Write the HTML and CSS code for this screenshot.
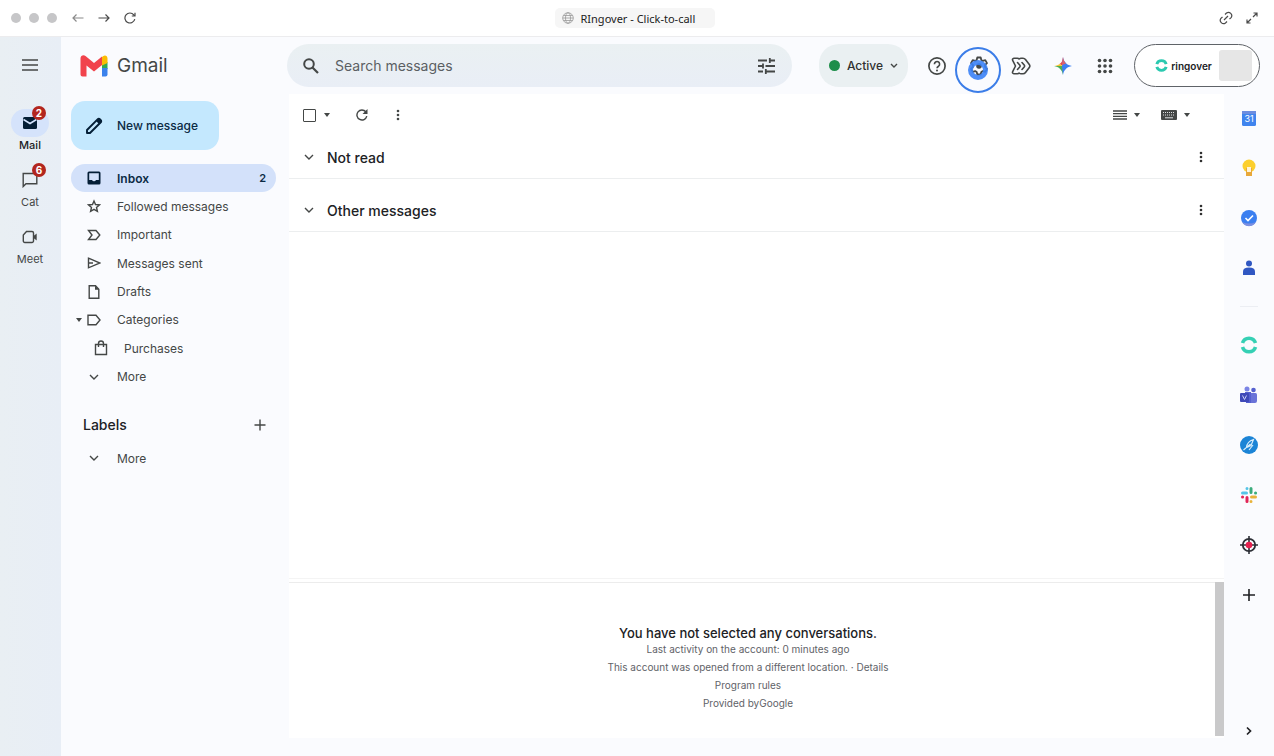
FILE: index.html
```html
<!DOCTYPE html>
<html lang="en">
<head>
    <meta charset="UTF-8">
    <meta name="viewport" content="width=device-width, initial-scale=1.0">
    <title>RIngover - Click-to-call</title>
    <link rel="stylesheet" href="styles.css">
</head>
<body>
    <header class="browser-bar">
        <div class="browser-left">
            <span class="dot"></span><span class="dot"></span><span class="dot"></span>
            <button class="nav-btn back" aria-label="Back"><svg width="12" height="12" viewBox="0 0 12 12"><path d="M11.500 6H1M4.500 2.500L1 6l3.500 3.500"/></svg></button>
            <button class="nav-btn" aria-label="Forward"><svg width="12" height="12" viewBox="0 0 12 12"><path d="M.5 6H11M7.500 2.500L11 6 7.500 9.500"/></svg></button>
            <button class="nav-btn" aria-label="Reload"><svg width="12" height="12" viewBox="0 0 12 12"><path d="M10.800 7.200A5 5 0 1 1 9.800 2.800L11 4M11 .8V4H7.800"/></svg></button>
        </div>
        <div class="tab">
            <svg width="12" height="12" viewBox="0 0 12 12"><circle cx="6" cy="6" r="5.300"/><ellipse cx="6" cy="6" rx="2.500" ry="5.300"/><path d="M.7 6h10.600M1.500 3.500h9M1.500 8.500h9"/></svg>
            <span>RIngover - Click-to-call</span>
        </div>
        <div class="browser-right">
            <button class="nav-btn" aria-label="Copy link"><svg width="14" height="14" viewBox="0 0 14 14"><path d="M6 3.500L7.500 2a3.300 3.300 0 0 1 4.600 4.600L10.500 8M8 10.500L6.500 12A3.300 3.300 0 0 1 1.900 7.400L3.500 6M5 9l4-4"/></svg></button>
            <button class="nav-btn" aria-label="Full screen"><svg width="12" height="12" viewBox="0 0 12 12"><path d="M7.500 1H11v3.500M11 1L7 5M4.500 11H1V7.500M1 11l4-4"/></svg></button>
        </div>
    </header>

    <div class="app">
        <nav class="rail">
            <button class="menu" aria-label="Main menu"><svg width="16" height="12" viewBox="0 0 16 12"><path d="M0 1h16M0 6h16M0 11h16" stroke="#444746" stroke-width="1.600"/></svg></button>
            <a class="rail-item active" href="#">
                <span class="rail-icon"><svg width="16" height="14" viewBox="0 0 16 14"><rect x="1" y="1" width="14" height="12" rx="1.500" fill="#041e36"/><path d="M1.500 3.500L8 7.500l6.500-4" fill="none" stroke="#d3e3fd" stroke-width="1.500"/></svg><b class="badge">2</b></span>
                <span class="rail-label">Mail</span>
            </a>
            <a class="rail-item" href="#">
                <span class="rail-icon"><svg width="16" height="16" viewBox="0 0 16 16"><path d="M1.200 14.500V1.500h13.600v10.200H4z" class="line"/></svg><b class="badge">6</b></span>
                <span class="rail-label">Cat</span>
            </a>
            <a class="rail-item" href="#">
                <span class="rail-icon"><svg width="16" height="14" viewBox="0 0 16 14"><path d="M4.500 1.500H10a1.500 1.500 0 0 1 1.500 1.500v8A1.500 1.500 0 0 1 10 12.500H2.800A1.500 1.500 0 0 1 1.300 11V5z" class="line"/><path d="M11.500 6l3.200-2.500v7L11.500 8z" fill="#444746"/></svg></span>
                <span class="rail-label">Meet</span>
            </a>
        </nav>

        <div class="workspace">
            <div class="topbar">
                <a class="logo" href="#">
                    <svg width="28" height="22" viewBox="0 0 28 22">
                        <path d="M22 9l5.500-2v7H22z" fill="#34a853"/>
                        <path d="M22 13h5.500v6.500a2 2 0 0 1-2 2H22z" fill="#3b82ec"/>
                        <path d="M22 2l1-.8C25-.5 27.500 .7 27.500 3.500V8L22 10.500z" fill="#fbbc04"/>
                        <path d="M.5 3.500C.5.600 3.500-.6 5.500 1L14 8l8-6.500V10l-8 6.500-7.500-6v11H2.500a2 2 0 0 1-2-2z" fill="#f1434c"/>
                    </svg>
                    <span>Gmail</span>
                </a>
                <form class="search">
                    <button type="button" aria-label="Search"><svg width="16" height="16" viewBox="0 0 16 16"><circle cx="6" cy="6" r="4.800" fill="none" stroke="#444746" stroke-width="2"/><path d="M9.500 9.500L15 15" stroke="#444746" stroke-width="2.200"/></svg></button>
                    <input type="text" placeholder="Search messages" aria-label="Search messages">
                    <button type="button" aria-label="Search options"><svg width="17" height="16" viewBox="0 0 17 16"><path d="M0 2.500h9M11.500 2.500H17M11.800 0v5M0 8h5M7.500 8H17M5 5.500v5M0 13.500h5M7.500 13.500H17M7.800 11v5" fill="none" stroke="#444746" stroke-width="1.800"/></svg></button>
                </form>
                <button class="status"><span class="status-dot"></span>Active<svg width="8" height="5" viewBox="0 0 8 5"><path d="M1 1l3 3 3-3" class="line"/></svg></button>
                <button class="top-icon" aria-label="Help"><svg width="18" height="18" viewBox="0 0 18 18"><circle cx="9" cy="9" r="8.100" fill="none" stroke="#444746" stroke-width="1.700"/><path d="M6.400 7.200a2.600 2.600 0 1 1 4.200 2C9.600 9.900 9 10.300 9 11.200" fill="none" stroke="#444746" stroke-width="1.600"/><circle cx="9" cy="13.600" r="1" fill="#444746"/></svg></button>
                <button class="top-icon settings" aria-label="Settings">
                    <svg width="20" height="20" viewBox="0 0 20 20"><path d="M8.300 1.500h3.400l.6 2.500 1.500.9 2.500-.8 1.700 3-1.900 1.800v2.200l1.900 1.800-1.700 3-2.500-.8-1.500.9-.6 2.500H8.300L7.700 16l-1.500-.9-2.500.8-1.700-3 1.900-1.800V8.900L2 7.100l1.700-3 2.500.8L7.700 4z" fill="none" stroke="#444746" stroke-width="1.800" stroke-linejoin="round"/><circle cx="10" cy="10" r="2.800" fill="#444746"/></svg>
                    <span class="pointer"></span>
                </button>
                <button class="top-icon" aria-label="Add-ons"><svg width="20" height="18" viewBox="0 0 20 18"><path d="M3 1.200h3.500q1 0 1.600.8Q9 1.200 10 1.200h2q1.500 0 2.500 1.300l3.800 5q1.100 1.500 0 3l-3.800 5q-1 1.300-2.500 1.300h-2q-1 0-1.900-.8-.6.800-1.600.8H3q-2.200-.4-1.200-2.500L4.500 9 1.800 3.700Q.8 1.600 3 1.200zM6.500 5.500L8.700 8q.8 1 0 2l-2.200 2.500M11 5.500L13.200 8q.8 1 0 2L11 12.500" fill="none" stroke="#444746" stroke-width="1.600" stroke-linejoin="round" stroke-linecap="round"/></svg></button>
                <button class="top-icon" aria-label="Gemini"><svg width="18" height="18" viewBox="0 0 18 18"><path d="M9 0C8.500 4 7.500 6 5.500 7L9 9z" fill="#ea4b45"/><path d="M0 9c2.500-.4 4.200-1 5.500-2L9 9z" fill="#f7c331"/><path d="M0 9c5 .7 8.300 4 9 9V9z" fill="#4fae55"/><path d="M9 0c.7 5 4 8.300 9 9-5 .7-8.300 4-9 9L8 10z" fill="#3c7ff2"/><path d="M9 0c.4 3 1.500 5 3 6.500L8 8z" fill="#e0606a"/></svg></button>
                <button class="top-icon" aria-label="Google apps"><svg width="16" height="16" viewBox="0 0 16 16" fill="#444746"><circle cx="2.500" cy="2.500" r="1.800"/><circle cx="8" cy="2.500" r="1.800"/><circle cx="13.500" cy="2.500" r="1.800"/><circle cx="2.500" cy="8" r="1.800"/><circle cx="8" cy="8" r="1.800"/><circle cx="13.500" cy="8" r="1.800"/><circle cx="2.500" cy="13.500" r="1.800"/><circle cx="8" cy="13.500" r="1.800"/><circle cx="13.500" cy="13.500" r="1.800"/></svg></button>
                <button class="account">
                    <svg width="13" height="13" viewBox="0 0 18 18"><path d="M2.500 7a6.800 6.800 0 0 1 13 0M15.500 11a6.800 6.800 0 0 1-13 0" fill="none" stroke="#2bc9b0" stroke-width="4"/></svg>
                    <span class="account-name">ringover</span>
                    <span class="avatar"></span>
                </button>
            </div>

            <div class="columns">
                <aside class="sidebar">
                    <button class="compose"><svg width="18" height="18" viewBox="0 0 18 18"><path d="M2 16v-3L12.800 2.200a1.400 1.400 0 0 1 2 0l1 1a1.400 1.400 0 0 1 0 2L5 16z" fill="none" stroke="#041e36" stroke-width="1.900" stroke-linejoin="round"/><path d="M11 4l3-3 3 3-3 3z" fill="#041e36"/></svg>New message</button>
                    <ul class="folders">
                        <li><a class="folder selected" href="#"><svg width="14" height="14" viewBox="0 0 14 14"><path d="M2 .5h10A1.500 1.500 0 0 1 13.500 2v10a1.500 1.500 0 0 1-1.500 1.500H2A1.500 1.500 0 0 1 .5 12V2A1.500 1.500 0 0 1 2 .5zM2.200 2.200V9H5a2.200 2.200 0 0 0 4 0h2.800V2.200z" fill="#041e36" fill-rule="evenodd"/></svg>Inbox<span class="count">2</span></a></li>
                        <li><a class="folder" href="#"><svg width="14" height="14" viewBox="0 0 14 14"><path d="M7 2l1.500 3.500 4 .3-3 2.600.9 4L7 10.300l-3.400 2.100.9-4-3-2.600 4-.3z" class="line"/></svg>Followed messages</a></li>
                        <li><a class="folder" href="#"><svg width="14" height="14" viewBox="0 0 14 14"><path d="M1.500 2.500H9L12.800 7 9 11.500H1.500L5 7z" class="line"/></svg>Important</a></li>
                        <li><a class="folder" href="#"><svg width="14" height="14" viewBox="0 0 14 14"><path d="M1.500 2.200L13 7 1.500 11.800zM1.500 7H6" class="line"/></svg>Messages sent</a></li>
                        <li><a class="folder" href="#"><svg width="14" height="14" viewBox="0 0 14 14"><path d="M2.200.7h6.300l3.300 3.600v9H2.200z" class="line"/><path d="M8 .5v4.300h4z" fill="#444746"/></svg>Drafts</a></li>
                        <li><a class="folder" href="#"><i class="caret"></i><svg width="14" height="14" viewBox="0 0 14 14"><path d="M1 2.200h8L13 7l-4 4.800H1z" class="line"/></svg>Categories</a></li>
                        <li><a class="folder nested" href="#"><svg width="14" height="16" viewBox="0 0 14 16"><path d="M1.500 4.500h11v10h-11zM4.500 7V3.500a2.500 2.500 0 0 1 5 0V7" class="line"/></svg>Purchases</a></li>
                        <li><a class="folder" href="#"><svg width="14" height="14" viewBox="0 0 14 14"><path d="M3 5l4 4 4-4" class="line"/></svg>More</a></li>
                    </ul>
                    <div class="labels-head"><h2>Labels</h2><button aria-label="Create new label"><svg width="12" height="12" viewBox="0 0 12 12"><path d="M6 .5v11M.5 6h11" class="line"/></svg></button></div>
                    <a class="folder" href="#"><svg width="14" height="14" viewBox="0 0 14 14"><path d="M3 5l4 4 4-4" class="line"/></svg>More</a>
                </aside>

                <main class="content">
                    <div class="toolbar">
                        <input class="select-all" type="checkbox" aria-label="Select all">
                        <i class="caret"></i>
                        <button class="refresh" aria-label="Refresh"><svg width="12" height="12" viewBox="0 0 12 12"><path d="M10.800 7.200A5 5 0 1 1 9.800 2.800" class="line"/><path d="M11.500 0v5h-5z" fill="#444746"/></svg></button>
                        <button aria-label="More options"><svg width="14" height="12" viewBox="0 0 14 12" fill="#444746"><circle cx="7" cy="2" r="1.300"/><circle cx="7" cy="6" r="1.300"/><circle cx="7" cy="10" r="1.300"/></svg></button>
                        <div class="toolbar-right">
                            <button aria-label="Split pane"><svg width="14" height="10" viewBox="0 0 14 10"><path d="M0 1h14M0 3.600h14M0 6.300h14M0 9h14" stroke="#444746" stroke-width="1.300"/></svg><i class="caret"></i></button>
                            <button aria-label="Input tools"><svg width="16" height="10" viewBox="0 0 16 10"><rect width="16" height="10" rx="1" fill="#444746"/><path d="M2 2.500h12M2 5h12" stroke="#dfe1e3" stroke-dasharray="1 1"/><path d="M4 7.800h8" stroke="#dfe1e3"/></svg><i class="caret"></i></button>
                        </div>
                    </div>
                    <section class="message-group">
                        <svg width="10" height="6" viewBox="0 0 10 6"><path d="M1 1l4 4 4-4" class="line"/></svg>
                        <h2>Not read</h2>
                        <button aria-label="Not read options"><svg width="14" height="12" viewBox="0 0 14 12" fill="#303030"><circle cx="7" cy="2" r="1.300"/><circle cx="7" cy="6" r="1.300"/><circle cx="7" cy="10" r="1.300"/></svg></button>
                    </section>
                    <section class="message-group">
                        <svg width="10" height="6" viewBox="0 0 10 6"><path d="M1 1l4 4 4-4" class="line"/></svg>
                        <h2>Other messages</h2>
                        <button aria-label="Other messages options"><svg width="14" height="12" viewBox="0 0 14 12" fill="#303030"><circle cx="7" cy="2" r="1.300"/><circle cx="7" cy="6" r="1.300"/><circle cx="7" cy="10" r="1.300"/></svg></button>
                    </section>
                    <div class="preview">
                        <div class="preview-text">
                            <h3>You have not selected any conversations.</h3>
                            <p>Last activity on the account: 0 minutes ago</p>
                            <p>This account was opened from a different location. · <a href="#">Details</a></p>
                            <p><a href="#">Program rules</a></p>
                            <p>Provided byGoogle</p>
                        </div>
                        <div class="scrollbar"></div>
                    </div>
                </main>

                <aside class="addons">
                    <button aria-label="Calendar"><svg width="18" height="18" viewBox="0 0 18 18"><rect x="2" y="2" width="14" height="15" rx="1.500" fill="#3f84ee"/><rect x="2" y="2" width="14" height="3" fill="#6c8de0"/><text x="9" y="13" text-anchor="middle" class="cal-day">31</text></svg></button>
                    <button aria-label="Keep"><svg width="18" height="18" viewBox="0 0 18 18"><circle cx="9" cy="7" r="6.500" fill="#fccf2d"/><path d="M6 9h6v8H6z" fill="#e8a83a"/><path d="M7 8h4v5H7z" fill="#fff3d6"/></svg></button>
                    <button aria-label="Tasks"><svg width="18" height="18" viewBox="0 0 18 18"><circle cx="9" cy="9" r="8" fill="#3b7ff0"/><path d="M2 13q7 3 14 0a8 8 0 0 1-14 0z" fill="#7d8fe0"/><path d="M5.500 9l2.500 2.500 5-5" fill="none" stroke="#fff" stroke-width="1.600"/></svg></button>
                    <button aria-label="Contacts"><svg width="18" height="18" viewBox="0 0 18 18" fill="#3057c2"><circle cx="9" cy="4.500" r="3"/><path d="M3 16v-3.500C3 9.800 5 8.500 9 8.500s6 1.300 6 4V16z"/></svg></button>
                    <hr>
                    <button aria-label="Ringover"><svg width="18" height="18" viewBox="0 0 18 18"><path d="M2.500 7a6.800 6.800 0 0 1 13 0M15.500 11a6.800 6.800 0 0 1-13 0" fill="none" stroke="#35d0b4" stroke-width="3.600"/></svg></button>
                    <button aria-label="Teams"><svg width="18" height="18" viewBox="0 0 18 18" fill="#5560cf"><circle cx="7" cy="3" r="2.500" fill="#7b84e5"/><circle cx="13.500" cy="4" r="2.300"/><path d="M5 6h6v11H6z"/><path d="M11 7h4.500A1.500 1.500 0 0 1 17 8.500V15a2 2 0 0 1-2 2h-4z" fill="#6a73d8"/><rect y="7" width="9" height="9" rx="1" fill="#3f49b8"/><path d="M2.500 9.500l2 4 2-4" fill="none" stroke="#c9cdf6"/></svg></button>
                    <button aria-label="Compass"><svg width="18" height="18" viewBox="0 0 18 18"><circle cx="9" cy="9" r="9" fill="#1b84d6"/><path d="M13.500 3.500Q7 5.500 6.500 11.500L11 9.500zM3.500 14l7-6M9 14l4-5" fill="none" stroke="#d5ecfb" stroke-width="1.200"/></svg></button>
                    <button aria-label="Slack"><svg width="18" height="18" viewBox="0 0 18 18" fill="none" stroke-width="3" stroke-linecap="round"><path d="M2.500 7h4M7 2.500v.1" stroke="#55c3e8"/><path d="M11 2.500v4M15.500 7h.1" stroke="#3bac7c"/><path d="M11.500 11h4M11 15.500v.1" stroke="#e8b33a"/><path d="M7 11.500v4M2.500 11h.1" stroke="#e02458"/></svg></button>
                    <button aria-label="Target"><svg width="18" height="18" viewBox="0 0 18 18"><circle cx="9" cy="9" r="6.200" fill="none" stroke="#2c2f36" stroke-width="1.800"/><path d="M9 0v18M0 9h18" stroke="#2c2f36" stroke-width="1.600"/><circle cx="9" cy="9" r="3.300" fill="#e6214f"/></svg></button>
                    <button aria-label="Get add-ons"><svg width="18" height="18" viewBox="0 0 18 18"><path d="M9 3v12M3 9h12" stroke="#202124" stroke-width="1.600"/></svg></button>
                    <button class="collapse" aria-label="Hide side panel"><svg width="18" height="18" viewBox="0 0 18 18"><path d="M7 5.500L10.500 9 7 12.500" fill="none" stroke="#202124" stroke-width="1.700"/></svg></button>
                </aside>
            </div>
        </div>
    </div>
</body>
</html>
```
FILE: styles.css
```css
*,
*::after {
    box-sizing: border-box;
}
body {
    margin: 0;
    min-height: 100vh;
    display: flex;
    flex-direction: column;
    background-color: #fff;
    color: #444746;
    font-family: Inter, "Liberation Sans", sans-serif;
    font-size: 12px;
}
button {
    display: flex;
    justify-content: center;
    align-items: center;
    padding: 0;
    border: 0;
    background: none;
    color: inherit;
    font: inherit;
    cursor: pointer;
}
a {
    color: inherit;
    text-decoration: none;
}
h2, h3, p, ul {
    margin: 0;
    padding: 0;
    list-style: none;
}
svg {
    flex: none;
}
.line {
    fill: none;
    stroke: #444746;
    stroke-width: 1.4px;
}
.caret {
    width: 0;
    border: 3px solid transparent;
    border-top: 4px solid #444746;
    border-bottom: 0;
}

/* browser bar */
.browser-bar {
    display: flex;
    align-items: center;
    height: 37px;
    padding: 0 16px 0 11px;
    border-bottom: 1px solid #ececee;
}
.browser-left,
.browser-right {
    flex: 1;
    display: flex;
    align-items: center;
}
.browser-left {
    gap: 8px;
}
.browser-right {
    justify-content: flex-end;
    gap: 13px;
}
.dot {
    width: 10px;
    height: 10px;
    border-radius: 50%;
    background-color: #c6c6c8;
}
.nav-btn {
    margin-right: 6px;
}
.browser-left .back {
    margin-left: 7px;
}
.browser-right .nav-btn {
    margin: 0;
}
.nav-btn svg {
    fill: none;
    stroke: #4a4a4a;
    stroke-width: 1.2px;
}
.nav-btn.back svg {
    stroke: #8a8a8a;
}
.tab {
    display: flex;
    align-items: center;
    gap: 7px;
    width: 160px;
    height: 20px;
    padding-left: 7px;
    border-radius: 5px;
    background-color: #f6f6f6;
    color: #222;
    font-family: "Noto Sans", sans-serif;
    font-size: 11px;
    white-space: nowrap;
}
.tab svg {
    fill: none;
    stroke: #999;
    stroke-width: 0.8px;
}

/* left rail */
.app {
    flex: 1;
    display: flex;
}
.rail {
    display: flex;
    flex-direction: column;
    align-items: center;
    gap: 13px;
    width: 61px;
    padding-right: 1px;
    background: linear-gradient(90deg, #e9eff3, #e8eef6);
}
.menu {
    height: 56px;
    margin-bottom: 3px;
}
.rail-item {
    display: flex;
    flex-direction: column;
    align-items: center;
}
.rail-icon {
    position: relative;
    display: flex;
    justify-content: center;
    align-items: center;
    width: 38px;
    height: 28px;
    border-radius: 14px;
}
.active .rail-icon {
    background-color: #d5e3fb;
}
.rail-label {
    font-size: 11px;
    line-height: 16px;
}
.active .rail-label {
    color: #202124;
    font-weight: 500;
}
.badge {
    position: absolute;
    top: -3px;
    right: 3px;
    width: 14px;
    height: 14px;
    border-radius: 50%;
    background-color: #b3261e;
    color: #fff;
    font-size: 10px;
    line-height: 14px;
    text-align: center;
}

/* top bar */
.workspace {
    flex: 1;
    display: flex;
    flex-direction: column;
    background-color: #fafbfe;
}
.topbar {
    display: flex;
    align-items: center;
    height: 57px;
    padding: 0 14px 0 19px;
}
.logo {
    display: flex;
    align-items: center;
    gap: 9px;
    width: 207px;
    font-size: 19px;
}
.search {
    flex: 1;
    display: flex;
    align-items: center;
    height: 43px;
    margin-right: 27px;
    padding: 0 17px 0 16px;
    border-radius: 22px;
    background: linear-gradient(#eaf0f2, #e9eef6);
}
.search input {
    flex: 1;
    min-width: 0;
    margin-left: 16px;
    padding: 0;
    border: 0;
    outline: 0;
    background: none;
    color: #444746;
    font: inherit;
    font-size: 14px;
}
.search input::placeholder {
    color: #5b5f63;
}
.status {
    gap: 7px;
    width: 89px;
    height: 43px;
    margin-right: 8px;
    border-radius: 20px;
    background-color: #eaf0f2;
    color: #303030;
    font-weight: 500;
}
.status-dot {
    width: 11px;
    height: 11px;
    border-radius: 50%;
    background-color: #1e8e4a;
}
.top-icon {
    width: 42px;
    height: 42px;
}
.settings {
    position: relative;
}
/* click marker over the gear */
.pointer {
    position: absolute;
    top: 2px;
    left: -3px;
    width: 46px;
    height: 46px;
    border: 2px solid #3b7de8;
    border-radius: 50%;
}
.pointer::after {
    content: '';
    position: absolute;
    top: 11px;
    left: 11px;
    width: 20px;
    height: 20px;
    border: 5px solid #3b82f6;
    border-radius: 50%;
    opacity: 0.9;
}
.account {
    gap: 3px;
    width: 126px;
    height: 43px;
    margin-left: 8px;
    padding-left: 13px;
    border: 1px solid #5f6368;
    border-radius: 22px;
    background-color: #fff;
    color: #202124;
}
.account-name {
    font-weight: 600;
    font-size: 10px;
}
.avatar {
    width: 33px;
    height: 31px;
    margin-left: 4px;
    border-radius: 3px;
    background-color: #e6e6e6;
}

/* sidebar */
.columns {
    flex: 1;
    display: flex;
}
.sidebar {
    width: 228px;
    padding: 7px 13px 0 10px;
}
.compose {
    justify-content: flex-start;
    gap: 14px;
    width: 148px;
    height: 49px;
    padding-left: 14px;
    border-radius: 14px;
    background-color: #c4e8fe;
    color: #0b2a44;
    font-weight: 500;
}
.folders {
    display: flex;
    flex-direction: column;
    height: 227px;
    margin: 14px 0;
}
.folders li {
    flex: 1;
}
.folder {
    position: relative;
    display: flex;
    align-items: center;
    gap: 16px;
    height: 28px;
    padding: 0 10px 0 16px;
    border-radius: 14px;
}
.folder .caret {
    position: absolute;
    left: 5px;
}
.selected {
    background-color: #d3e1fa;
    color: #0b2a44;
    font-weight: 600;
}
.nested {
    padding-left: 23px;
}
.count {
    margin-left: auto;
    font-size: 11px;
}
.labels-head {
    display: flex;
    justify-content: space-between;
    align-items: center;
    height: 39px;
    padding: 0 10px 0 12px;
}
.labels-head h2 {
    color: #202124;
    font-size: 14px;
    font-weight: 500;
}

/* message list */
.content {
    flex: 1;
    display: flex;
    flex-direction: column;
    margin-bottom: 18px;
    background-color: #fff;
}
.toolbar {
    display: flex;
    align-items: center;
    height: 42px;
    padding: 0 34px 0 14px;
}
.select-all {
    appearance: none;
    width: 13px;
    height: 13px;
    margin: 0 8px 0 0;
    border: 1px solid #444746;
    border-radius: 1px;
}
.refresh {
    margin: 0 23px 0 26px;
}
.toolbar-right {
    display: flex;
    gap: 21px;
    margin-left: auto;
}
.toolbar-right button {
    gap: 7px;
}
.message-group {
    display: flex;
    align-items: center;
    gap: 13px;
    height: 43px;
    margin-bottom: 10px;
    padding: 0 16px 0 15px;
    border-bottom: 1px solid #eceeef;
}
.message-group h2 {
    flex: 1;
    color: #202124;
    font-size: 14px;
    font-weight: 500;
}
.preview {
    display: flex;
    height: 160px;
    margin-top: auto;
    padding-top: 3px;
    border-top: 1px solid #f4f4f4;
}
.preview-text {
    flex: 1;
    padding: 43px 8px 0 0;
    border-top: 1px solid #ececec;
    color: #5f6368;
    font-size: 10px;
    line-height: 18px;
    text-align: center;
}
.preview-text h3 {
    color: #202124;
    font-size: 13px;
    font-weight: 500;
    line-height: 14px;
}
.scrollbar {
    width: 9px;
    margin-bottom: 2px;
    background-color: #c9c9ca;
}

/* side panel */
.addons {
    display: flex;
    flex-direction: column;
    align-items: center;
    gap: 32px;
    width: 50px;
    padding: 15px 0 16px;
}
.addons button {
    height: 18px;
}
.addons hr {
    width: 18px;
    margin: -3px 0;
    border: 0;
    border-top: 1px solid #eceef3;
}
.cal-day {
    fill: #fff;
    font-size: 9px;
}
.addons .collapse {
    margin-top: auto;
}
```
